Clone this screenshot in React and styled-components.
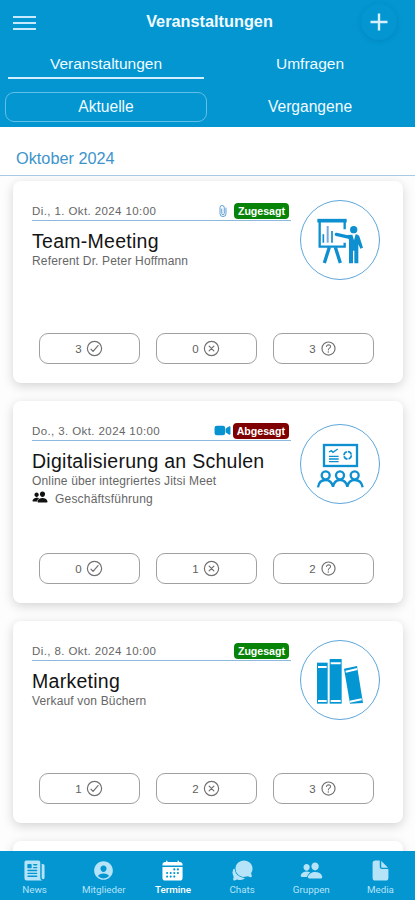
import styled, { createGlobalStyle } from "styled-components";
import {
  IoNewspaper,
  IoPersonCircle,
  IoCalendar,
  IoChatbubbles,
  IoPeople,
  IoDocument,
  IoAttachOutline,
  IoVideocam,
  IoCheckmarkCircleOutline,
  IoCloseCircleOutline,
  IoHelpCircleOutline,
} from "react-icons/io5";

const events = [
  {
    date: "Di., 1. Okt. 2024 10:00",
    title: "Team-Meeting",
    text: "Referent Dr. Peter Hoffmann",
    status: "Zugesagt",
    extra: "file",
    picture: "presentation",
    pictureTop: 19,
    votes: [3, 0, 3],
  },
  {
    date: "Do., 3. Okt. 2024 10:00",
    title: "Digitalisierung an Schulen",
    text: "Online über integriertes Jitsi Meet",
    group: "Geschäftsführung",
    status: "Abgesagt",
    extra: "video",
    picture: "class",
    pictureTop: 23,
    votes: [0, 1, 2],
  },
  {
    date: "Di., 8. Okt. 2024 10:00",
    title: "Marketing",
    text: "Verkauf von Büchern",
    status: "Zugesagt",
    picture: "books",
    pictureTop: 19,
    votes: [1, 2, 3],
  },
];

const tabs = [
  { label: "News", Icon: IoNewspaper },
  { label: "Mitglieder", Icon: IoPersonCircle },
  { label: "Termine", Icon: IoCalendar, active: true },
  { label: "Chats", Icon: IoChatbubbles },
  { label: "Gruppen", Icon: IoPeople },
  { label: "Media", Icon: IoDocument },
];

const voteIcons = [
  IoCheckmarkCircleOutline,
  IoCloseCircleOutline,
  IoHelpCircleOutline,
];

function Presentation() {
  return (
    <svg viewBox="15 15 240 240" fill="none" stroke="#0d8fd0">
      <path d="M67 77H155" strokeWidth="11" />
      <path d="M74 80V155H149V143M149 80V103" strokeWidth="7" />
      <path d="M85 118V143M111 108V143" strokeWidth="5" />
      <path d="M98 93V143" strokeWidth="6" stroke="#7aa9dc" />
      <path d="M103 157L88 204M121 157L136 204" strokeWidth="10" />
      <circle cx="176" cy="104" r="11" fill="#0d8fd0" stroke="none" />
      <path
        d="M124 118L164 127" strokeWidth="10" strokeLinecap="round"
      />
      <path
        d="M157 120L172 119L177 136L182 118Q190 118 193 124L204 158L196 161L190 148V205H178V167H174V205H162V135Z"
        fill="#0d8fd0"
        stroke="none"
      />
    </svg>
  );
}

function ClassRoom() {
  return (
    <svg viewBox="15 12 240 240" fill="none" stroke="#0d8fd0">
      <rect x="87" y="75" width="99" height="63" strokeWidth="7" />
      <path d="M102 96L109 92L114 97L128 87" strokeWidth="4" />
      <path d="M102 109H131M102 117H131M102 125H131" strokeWidth="4" />
      <circle cx="158" cy="106" r="11" strokeWidth="5" strokeDasharray="14 3" />
      <g strokeWidth="7">
        <circle cx="92" cy="166" r="12" />
        <circle cx="135" cy="166" r="12" />
        <circle cx="179" cy="166" r="12" />
        <path d="M69 202Q72 180 92 180Q109 180 114 200Q118 180 135 180Q153 180 157 200Q161 180 179 180Q199 180 203 202" />
      </g>
    </svg>
  );
}

function Books() {
  return (
    <svg viewBox="285 60 240 240">
      <g fill="#0495d3">
        <path d="M336 128H368V251H336Z" />
        <path d="M374 117H410V251H374Z" />
        <path d="M417 146L456 138L474 249L435 251Z" />
      </g>
      <g stroke="#fff" strokeWidth="6">
        <path d="M339 141H365M339 243H365M377 130H407M377 243H407" />
        <path d="M422 155L457 147M434 245L470 238" />
      </g>
    </svg>
  );
}

const pictures = {
  presentation: Presentation,
  class: ClassRoom,
  books: Books,
};

function EventCard({ event }) {
  const Picture = pictures[event.picture];

  return (
    <Card>
      <CardTop>
        <Info>
          <DateRow>
            <EventDate>{event.date}</EventDate>
            <Status>
              {event.extra === "file" && <FileIcon />}
              {event.extra === "video" && <VideoIcon />}
              <Badge $status={event.status}>{event.status}</Badge>
            </Status>
          </DateRow>
          <EventTitle>{event.title}</EventTitle>
          <EventText>{event.text}</EventText>
          {event.group && (
            <Group>
              <IoPeople />
              {event.group}
            </Group>
          )}
        </Info>
        <Avatar $top={event.pictureTop}>
          <Picture />
        </Avatar>
      </CardTop>
      <Votes>
        {event.votes.map((count, index) => {
          const Icon = voteIcons[index];
          return (
            <Vote key={index}>
              {count}
              <Icon />
            </Vote>
          );
        })}
      </Votes>
    </Card>
  );
}

export default function App() {
  return (
    <Screen>
      <GlobalStyle />
      <Header>
        <TitleBar>
          <MenuButton>
            <span />
            <span />
            <span />
          </MenuButton>
          <PageTitle>Veranstaltungen</PageTitle>
          <AddButton>
            <svg width="18" height="18" viewBox="0 0 18 18">
              <path d="M9 0.5V17.5M0.5 9H17.5" stroke="#d8efff" strokeWidth="2.4" />
            </svg>
          </AddButton>
        </TitleBar>
        <Tabs>
          <Tab $active>Veranstaltungen</Tab>
          <Tab>Umfragen</Tab>
        </Tabs>
        <Segments>
          <Segment $active>Aktuelle</Segment>
          <Segment>Vergangene</Segment>
        </Segments>
      </Header>
      <Month>Oktober 2024</Month>
      <List>
        {events.map((event) => (
          <EventCard key={event.date} event={event} />
        ))}
        <Card />
      </List>
      <Footer>
        {tabs.map(({ label, Icon, active }) => (
          <FooterTab key={label} $active={active}>
            <Icon />
            {label}
          </FooterTab>
        ))}
      </Footer>
    </Screen>
  );
}

const GlobalStyle = createGlobalStyle`
  * {
    box-sizing: border-box;
  }
  body {
    margin: 0;
    overflow: hidden;
  }
  h1, h2, p {
    margin: 0;
    font-weight: 400;
  }
  button {
    border: none;
    padding: 0;
    background: none;
    font-family: inherit;
  }
`;

const Screen = styled.div`
  display: flex;
  flex-direction: column;
  width: 100%;
  height: 900px;
  overflow: hidden;
  background-color: #ffffff;
  font-family: "Liberation Sans", Arial, sans-serif;
`;

const Header = styled.header`
  flex: none;
  height: 127px;
  background-color: #0396d1;
  color: #f0faff;
`;

const TitleBar = styled.div`
  display: grid;
  grid-template-columns: 48px 1fr 48px;
  align-items: center;
  height: 44px;
  padding: 0 12px;
`;

const MenuButton = styled.button`
  display: flex;
  flex-direction: column;
  gap: 4px;
  width: 24px;
  padding: 1px 0 0 1px;
  span {
    height: 2px;
    width: 100%;
    background-color: #c8eaff;
  }
`;

const PageTitle = styled.h1`
  font-weight: 700;
  font-size: 16.3px;
  line-height: 20px;
  text-align: center;
  padding: 0 0 2px 4px;
`;

const AddButton = styled.button`
  display: flex;
  justify-content: center;
  align-items: center;
  justify-self: end;
  width: 36px;
  height: 36px;
  margin-right: 6px;
  border-radius: 50%;
  box-shadow: 0 1px 5px rgba(0, 60, 100, 0.16);
`;

const Tabs = styled.div`
  display: grid;
  grid-template-columns: 1fr 1fr;
  column-gap: 8px;
  height: 35px;
  padding: 0 7px 0 8px;
`;

const Tab = styled.button`
  color: inherit;
  font-size: 15.5px;
  line-height: 18px;
  padding-top: 6px;
  border-bottom: 2px solid ${(props) => (props.$active ? "#d2eeff" : "transparent")};
`;

const Segments = styled.div`
  display: grid;
  grid-template-columns: 1fr 1fr;
  column-gap: 2px;
  padding: 13px 4px 0 5px;
`;

const Segment = styled.button`
  height: 30px;
  color: inherit;
  font-size: 15.6px;
  line-height: 18px;
  border: 1px solid ${(props) => (props.$active ? "#62bfe8" : "transparent")};
  border-radius: 9px;
`;

const Month = styled.h2`
  flex: none;
  height: 49px;
  padding: 21px 16px 0;
  border-bottom: 1px solid #a9c9e4;
  color: #3d94cb;
  font-size: 16.3px;
  line-height: 20px;
`;

const List = styled.main`
  display: flex;
  flex-direction: column;
  flex: 1;
  gap: 18px;
  min-height: 0;
  padding: 5px 12px 0 13px;
  overflow: hidden;
  background-color: #fdfdfd;
`;

const Card = styled.article`
  flex: none;
  height: 202px;
  padding-left: 19px;
  border-radius: 8px;
  background-color: #ffffff;
  box-shadow: 0 3px 11px rgba(0, 0, 0, 0.17);
`;

const CardTop = styled.div`
  display: flex;
  height: 152px;
`;

const Info = styled.div`
  width: 259px;
  padding-top: 20px;
`;

const DateRow = styled.div`
  display: flex;
  justify-content: space-between;
  align-items: center;
  height: 20px;
  padding-right: 2px;
  border-bottom: 1px solid #8eb9df;
`;

const EventDate = styled.p`
  color: #666666;
  font-size: 11.5px;
  line-height: 16px;
  letter-spacing: 0.4px;
  padding-top: 1px;
`;

const Status = styled.div`
  display: flex;
  align-items: center;
  gap: 4px;
`;

const FileIcon = styled(IoAttachOutline)`
  width: 16px;
  height: 16px;
  margin-right: -1px;
  color: #5e9ed6;
  stroke-width: 6px;
`;

const VideoIcon = styled(IoVideocam)`
  width: 17px;
  height: 17px;
  margin-right: -2px;
  color: #0792d0;
`;

const Badge = styled.span`
  height: 16px;
  padding: 0 4px;
  border-radius: 4px;
  background-color: ${(props) => (props.$status === "Zugesagt" ? "#078407" : "#800000")};
  color: #ffffff;
  font-weight: 700;
  font-size: 10.6px;
  line-height: 16px;
`;

const EventTitle = styled.h2`
  margin-top: 9px;
  color: #141414;
  font-size: 19.5px;
  line-height: 23px;
  letter-spacing: 0.27px;
  white-space: nowrap;
`;

const EventText = styled.p`
  color: #666666;
  font-size: 12px;
  line-height: 16px;
  letter-spacing: 0.16px;
`;

const Group = styled.div`
  display: flex;
  align-items: center;
  gap: 7px;
  height: 19px;
  color: #666666;
  font-size: 12px;
  letter-spacing: 0.2px;
  svg {
    width: 16px;
    height: 16px;
    margin-top: -3px;
    color: #111111;
  }
`;

const Avatar = styled.div`
  width: 80px;
  height: 80px;
  margin: ${(props) => props.$top}px 0 0 9px;
  border: 1px solid #5da6da;
  border-radius: 50%;
  svg {
    display: block;
    width: 80px;
    height: 80px;
    margin: -1px;
  }
`;

const Votes = styled.div`
  display: grid;
  grid-template-columns: repeat(3, 101px);
  column-gap: 16px;
  padding-left: 7px;
`;

const Vote = styled.button`
  display: flex;
  justify-content: center;
  align-items: center;
  gap: 3px;
  height: 31px;
  border: 1px solid #a0a0a0;
  border-radius: 9px;
  color: #606060;
  font-size: 11.5px;
  svg {
    width: 19px;
    height: 19px;
    color: #707070;
  }
`;

const Footer = styled.footer`
  display: grid;
  grid-template-columns: repeat(6, 1fr);
  flex: none;
  height: 49px;
  background-color: #0396d1;
  position: relative;
`;

const FooterTab = styled.button`
  display: flex;
  flex-direction: column;
  align-items: center;
  padding-top: 8px;
  color: ${(props) => (props.$active ? "#ffffff" : "#b5e3f8")};
  font-family: Roboto, sans-serif;
  font-size: 9.8px;
  line-height: 15px;
  font-weight: ${(props) => (props.$active ? 500 : 400)};
  svg {
    flex: none;
    width: 23px;
    height: 23px;
  }
`;
